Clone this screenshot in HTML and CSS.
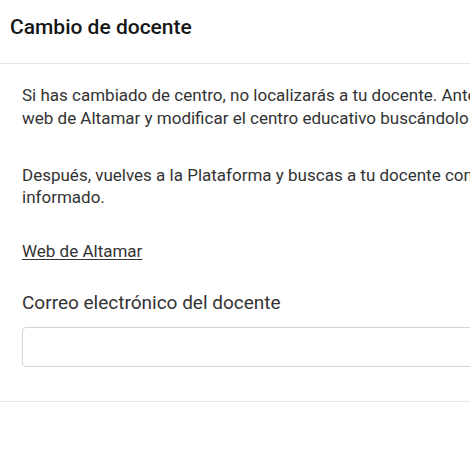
FILE: index.html
```html
<!DOCTYPE html>
<html lang="es">
<head>
<meta charset="utf-8">
<title>Cambio de docente</title>
<link rel="stylesheet" href="styles.css">
</head>
<body>
<div class="viewport">
  <div class="modal">
    <div class="modal-header">
      <h4 class="modal-title">Cambio de docente</h4>
    </div>
    <div class="modal-body">
      <p class="info">Si has cambiado de centro, no localizarás a tu docente. Antes debes acceder a la<br>web de Altamar y modificar el centro educativo buscándolo por su nombre.</p>
      <p class="info">Después, vuelves a la Plataforma y buscas a tu docente con el correo que te haya<br>informado.</p>
      <p class="info link-row"><a class="link" href="#">Web de Altamar</a></p>
      <label class="field-label" for="email">Correo electrónico del docente</label>
      <input class="field-input" id="email" type="email">
    </div>
    <div class="modal-footer"></div>
  </div>
</div>
</body>
</html>
```
FILE: styles.css
```css
html, body {
  margin: 0;
  padding: 0;
  background: #ffffff;
}
body {
  font-family: Roboto, "Liberation Sans", Arial, sans-serif;
  color: #333333;
}
.viewport {
  width: 100%;
  height: 468px;
  overflow: hidden;
}
.modal {
  width: 720px;
  background: #ffffff;
}
.modal-header {
  padding: 14px 10px 23px;
  border-bottom: 1px solid #e6e6e6;
}
.modal-title {
  margin: 0;
  font-size: 21px;
  line-height: 26px;
  font-weight: 500;
  color: #161616;
}
.modal-body {
  padding: 20px 22px 34px;
  display: flex;
  flex-direction: column;
}
.info {
  margin: 0 0 34.5px;
  font-size: 17px;
  line-height: 22.5px;
  color: #333333;
}
.link-row {
  margin-top: -3.5px;
  margin-bottom: 28px;
}
.link {
  color: #333333;
  text-decoration: underline;
  text-underline-offset: 2px;
}
.field-label {
  font-size: 19px;
  line-height: 26px;
  color: #333333;
  margin-bottom: 11px;
}
.field-input {
  box-sizing: border-box;
  width: 100%;
  height: 40px;
  margin: 0;
  border: 1px solid #d4d4d4;
  border-radius: 4px;
  background: #ffffff;
  font-family: inherit;
  font-size: 17px;
  padding: 6px 12px;
  outline: none;
}
.modal-footer {
  border-top: 1px solid #e6e6e6;
  height: 60px;
}
```
